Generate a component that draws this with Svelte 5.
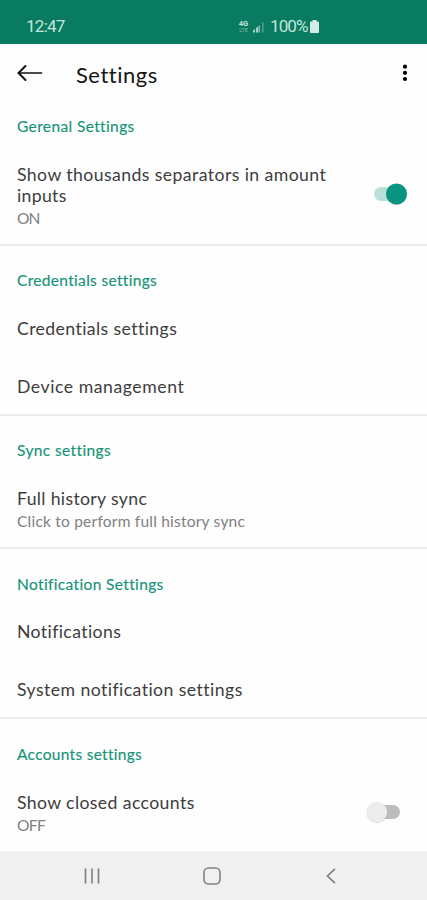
<script>
  const sections = [
    {
      title: 'Gerenal Settings', width: 117.5,
      rows: [{ lines: [['Show thousands separators in amount', 309], ['inputs', 49.5]], note: ['ON', 23], toggle: 'on' }]
    },
    {
      title: 'Credentials settings', width: 140,
      rows: [{ lines: [['Credentials settings', 160]] }, { lines: [['Device management', 167]] }]
    },
    {
      title: 'Sync settings', width: 94,
      rows: [{ lines: [['Full history sync', 130]], note: ['Click to perform full history sync', 228] }]
    },
    {
      title: 'Notification Settings', width: 146.5,
      rows: [{ lines: [['Notifications', 104]] }, { lines: [['System notification settings', 225.5]] }]
    },
    {
      title: 'Accounts settings', width: 125,
      rows: [{ lines: [['Show closed accounts', 177.5]], note: ['OFF', 28.5], toggle: 'off' }]
    }
  ];

  // Widens a label's letters, then tracks it out to its full width.
  function track(node, width, stretch = 1.07) {
    const natural = node.getBoundingClientRect().width;
    node.style.letterSpacing = `${(width / stretch - natural) / (node.textContent.length - 0.5)}px`;
    node.style.transform = `scaleX(${stretch})`;
  }
</script>

<div class="screen">
  <div class="status">
    <div class="clock"><span use:track={39}>12:47</span></div>
    <div class="network"><b>4G</b><small>LTE</small></div>
    <svg class="signal" width="12" height="12" viewBox="0 0 12 12">
      <path d="M0 11.500V9.500L2 8v3.500zM3 11.500V7L5 5.500v6z" fill="#a9d4c8" />
      <path d="M5.500 11.500V5L7 4v7.500z" fill="#86bfb0" />
      <path d="M9 11.500V2l1.600-1.500v11z" fill="#4f9f8c" />
    </svg>
    <div class="percent"><span use:track={38}>100%</span></div>
    <svg class="battery" width="9" height="13" viewBox="0 0 9 13">
      <path d="M2.500 0h4v1.500H8q1 0 1 1V12q0 1-1 1H1q-1 0-1-1V2.500q0-1 1-1h1.500z" fill="#d2eee5" />
    </svg>
  </div>

  <header>
    <svg class="back" width="26" height="18" viewBox="0 0 26 18" fill="none" stroke="#111" stroke-linecap="round" stroke-linejoin="round">
      <path d="M1.500 9H24.500" stroke-width="1.700" />
      <path d="M8.500 2L1.500 9l7 7" stroke-width="2" />
    </svg>
    <h1><span use:track={81.5}>Settings</span></h1>
    <svg class="more" width="6" height="18" viewBox="0 0 6 18" fill="#000">
      <circle cx="3" cy="2.700" r="2.100" /><circle cx="3" cy="8.800" r="2.100" /><circle cx="3" cy="15" r="2.100" />
    </svg>
  </header>

  <main>
    {#each sections as section}
      <section>
        <h2><span use:track={section.width}>{section.title}</span></h2>
        {#each section.rows as row}
          <div class="row" class:detailed={row.note}>
            <div class="copy">
              {#each row.lines as [text, width]}
                <div class="line"><span use:track={width}>{text}</span></div>
              {/each}
              {#if row.note}
                <div class="note"><span use:track={row.note[1]}>{row.note[0]}</span></div>
              {/if}
            </div>
            {#if row.toggle}
              <svg class="toggle {row.toggle}" width="42" height="24" viewBox="0 0 42 24">
                {#if row.toggle === 'on'}
                  <rect x="8" y="5" width="29" height="14" rx="7" fill="#b9e1da" />
                  <circle cx="30.500" cy="12.700" r="10.500" fill="#000" opacity="0.14" />
                  <circle cx="30.500" cy="12" r="10.500" fill="#089481" />
                {:else}
                  <rect x="5" y="5" width="29" height="14" rx="7" fill="#bcbcbc" />
                  <circle cx="11" cy="12.700" r="10.500" fill="#000" opacity="0.14" />
                  <circle cx="11" cy="12" r="10.300" fill="#ececec" />
                {/if}
              </svg>
            {/if}
          </div>
        {/each}
      </section>
    {/each}
  </main>

  <nav>
    <svg width="18" height="18" viewBox="0 0 18 18" stroke="#858585" stroke-width="1.700"><path d="M2.500 1.500v15M9 1.500v15M15.500 1.500v15" /></svg>
    <svg width="18" height="18" viewBox="0 0 18 18" fill="none" stroke="#808080" stroke-width="1.600"><rect x="1" y="1" width="16" height="16" rx="4.500" /></svg>
    <svg width="18" height="18" viewBox="0 0 18 18" fill="none" stroke="#808080" stroke-width="1.700"><path d="M13 1.800L5.500 9l7.500 7.200" /></svg>
  </nav>
</div>

<style>
  .screen {
    width: 427px;
    height: 900px;
    display: flex;
    flex-direction: column;
    overflow: hidden;
    background: #fefefe;
    font-family: Lato, "Liberation Sans", sans-serif;
    font-variant-ligatures: none;
  }
  span { display: inline-block; white-space: nowrap; transform-origin: left center; }
  .status {
    flex: none;
    box-sizing: border-box;
    height: 43.500px;
    padding: 10px 0 0 26px;
    display: flex;
    align-items: center;
    background: #087b61;
    color: #c2e5db;
    font-family: Roboto, sans-serif;
    font-size: 16px;
  }
  .clock { width: 212px; }
  .network { width: 11px; margin-right: 4px; display: flex; flex-direction: column; align-items: center; line-height: 6px; }
  .network b { font-size: 7.500px; }
  .network small { font-size: 5.500px; color: #78b8a7; }
  .percent { width: 38px; margin-left: 5px; }
  .battery { margin-left: 2px; }
  header {
    flex: none;
    height: 59.500px;
    padding-left: 17px;
    display: flex;
    align-items: center;
  }
  h1 { margin: 3px 0 0 33px; width: 292px; font-size: 20.500px; line-height: 26px; font-weight: 400; color: #151515; }
  .more { margin-left: 34px; }
  main { flex: 1; min-height: 0; overflow: hidden; }
  section { padding-top: 25.500px; border-bottom: 2px solid #ebebeb; }
  section:first-child { padding-top: 13.500px; }
  section:last-child { border: 0; }
  h2 { margin: 0 0 9.500px 17px; font-size: 14.500px; line-height: 20px; font-weight: 400; color: #159478; -webkit-text-stroke: 0.15px #159478; }
  .row { box-sizing: border-box; height: 57.500px; padding: 0 17px; display: flex; align-items: center; justify-content: space-between; }
  .row:last-child:not(.detailed) { height: 55.500px; padding-top: 3px; }
  .row.detailed { height: auto; padding-top: 18.500px; padding-bottom: 15px; }
  .line { height: 21px; font-size: 16.500px; line-height: 21px; color: #3d3d3d; }
  .note { height: 20px; margin-top: 2px; font-size: 14.500px; line-height: 20px; color: #808080; }
  .toggle { flex: none; }
  .on { margin-right: 2px; margin-bottom: 6px; }
  .off { margin-right: 2px; margin-bottom: 5px; }
  nav { flex: none; height: 49px; padding: 0 87px 0 83px; display: flex; align-items: center; justify-content: space-between; background: #f0f0f0; }
</style>
